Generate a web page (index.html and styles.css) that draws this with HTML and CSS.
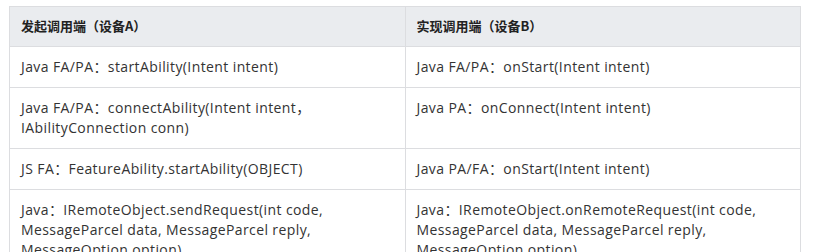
FILE: index.html
```html
<!DOCTYPE html>
<html lang="zh-CN">
<head>
<meta charset="utf-8">
<link rel="stylesheet" href="styles.css">
</head>
<body>
<table class="api-table">
  <thead>
    <tr><th>发起调用端（设备A）</th><th>实现调用端（设备B）</th></tr>
  </thead>
  <tbody>
    <tr><td>Java FA/PA：startAbility(Intent intent)</td><td>Java FA/PA：onStart(Intent intent)</td></tr>
    <tr><td>Java FA/PA：connectAbility(Intent intent，<br>IAbilityConnection conn)</td><td>Java PA：onConnect(Intent intent)</td></tr>
    <tr><td>JS FA：FeatureAbility.startAbility(OBJECT)</td><td>Java PA/FA：onStart(Intent intent)</td></tr>
    <tr><td>Java：IRemoteObject.sendRequest(int code,<br>MessageParcel data, MessageParcel reply,<br>MessageOption option)</td><td>Java：IRemoteObject.onRemoteRequest(int code,<br>MessageParcel data, MessageParcel reply,<br>MessageOption option)</td></tr>
  </tbody>
</table>
</body>
</html>
```
FILE: styles.css
```css
html, body { margin: 0; padding: 0; background: #fff; }
body { padding: 6px 0 0 9px; font-family: "Open Sans", "Noto Sans CJK SC", sans-serif; color: #333; }
.api-table { border-collapse: collapse; width: 792px; table-layout: fixed; }
.api-table th, .api-table td {
  border: 1px solid #dcdde0;
  text-align: left;
  vertical-align: top;
  padding: 10px 11px 10px 11px;
  font-size: 14px;
  letter-spacing: 0.4px;
  line-height: 20px;
}
.api-table th { background: #eaecef; font-weight: bold; font-size: 13px; letter-spacing: 0; color: #222; padding: 9px 11px 10px 11px; font-family: "Noto Sans CJK SC", sans-serif; }
```
